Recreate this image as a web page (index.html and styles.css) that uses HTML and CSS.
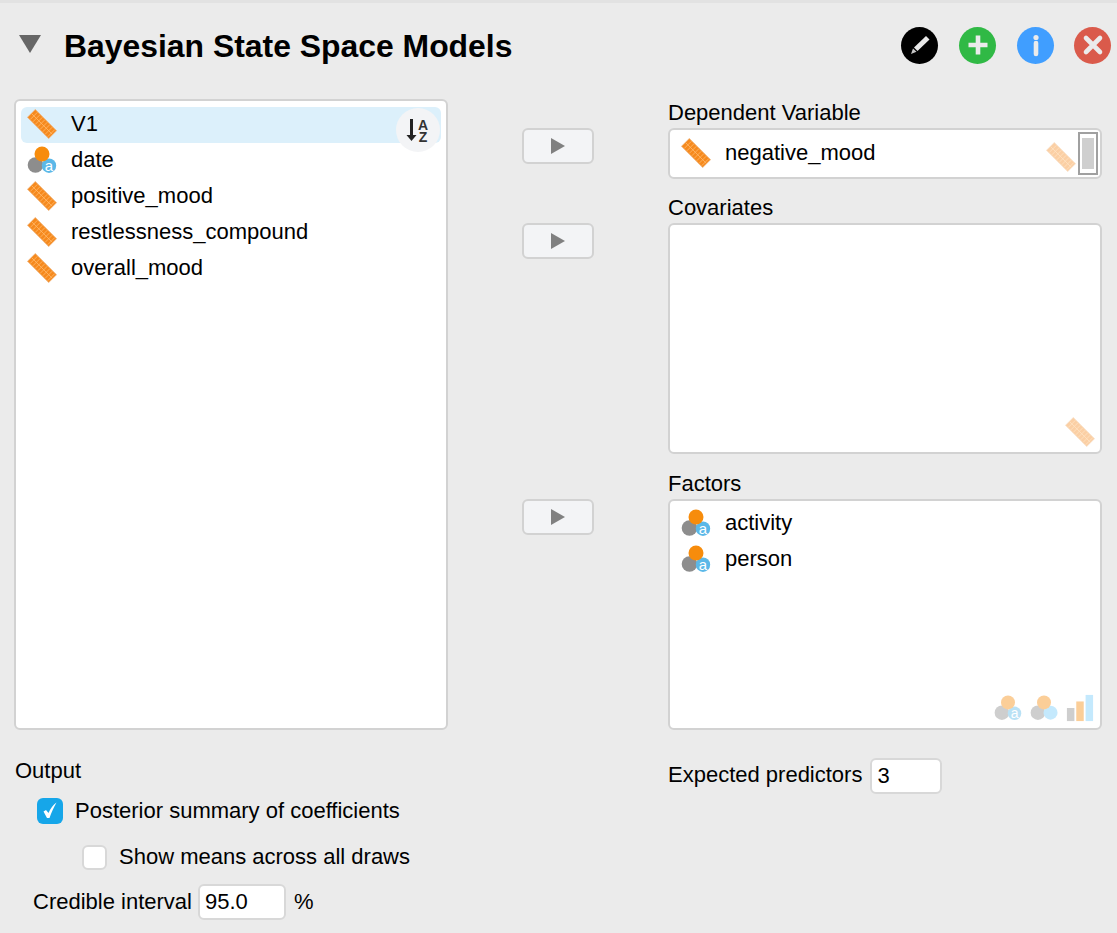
FILE: index.html
```html
<!DOCTYPE html>
<html>
<head>
    <title>Bayesian State Space Models</title>
    <link rel="stylesheet" href="styles.css">
</head>
<body>
    <svg class="defs" width="0" height="0">
        <symbol id="ruler" viewBox="0 0 30 30">
            <g transform="rotate(45 15 15)">
                <rect x="0" y="9.500" width="30" height="11" fill="#f68a1e" stroke="#eeb27a" stroke-width="0.8"/>
                <path d="M3.500 10v10M7 10v10M10.500 10v10M14 10v10M17.500 10v10M21 10v10M24.500 10v10M28 10v10M0 15h30" stroke="#ffb768" stroke-width="0.8" fill="none"/>
            </g>
        </symbol>
        <symbol id="nominal-base" viewBox="0 0 30 30">
            <circle cx="8.500" cy="20" r="7.800" fill="#8d8d8d"/>
            <circle cx="22" cy="20.700" r="7.200" fill="#5bb8e8"/>
            <circle cx="15" cy="9" r="7.500" fill="#f78c0c"/>
        </symbol>
        <symbol id="nominal" viewBox="0 0 30 30">
            <circle cx="8.500" cy="20" r="7.800" fill="#8d8d8d"/>
            <circle cx="22" cy="20" r="7.500" fill="#74cdfb"/>
            <circle cx="15" cy="9" r="7.500" fill="#f78c0c"/>
        </symbol>
        <symbol id="ordinal" viewBox="0 0 30 30">
            <rect x="1" y="15" width="8" height="14" fill="#8d8d8d"/>
            <rect x="11" y="8" width="8" height="21" fill="#f78c0c"/>
            <path d="M21 1h8v28h-8z" fill="#74cdfb"/>
        </symbol>
    </svg>

    <header class="title-bar">
        <span class="collapse-arrow"></span>
        <h1 class="title">Bayesian State Space Models</h1>
        <div class="actions">
            <span class="action action-edit">
                <svg viewBox="0 0 36 36" width="36" height="36"><path d="M24 9l3.500 3.500L15.500 24l-3.500-3.500z" fill="#e8e8e8"/><path d="M11 21.500l3.500 3.300L9 27z" fill="#c8c8c8"/></svg>
            </span>
            <span class="action action-add">
                <svg viewBox="0 0 36 36" width="36" height="36"><path d="M18 8.500v19M8.500 18h19" stroke="#ebebeb" stroke-width="4.600" fill="none"/></svg>
            </span>
            <span class="action action-info">
                <svg viewBox="0 0 36 36" width="36" height="36"><circle cx="18" cy="10.500" r="2.600" fill="#ebebeb"/><path d="M18 16v11" stroke="#ebebeb" stroke-width="4.600" stroke-linecap="round" fill="none"/></svg>
            </span>
            <span class="action action-close">
                <svg viewBox="0 0 36 36" width="36" height="36"><path d="M11 11l14 14M25 11L11 25" stroke="#ebebeb" stroke-width="4.600" stroke-linecap="round" fill="none"/></svg>
            </span>
        </div>
    </header>

    <main class="assign-grid">
        <div class="box source-list">
            <div class="var-row selected"><svg class="var-icon"><use href="#ruler"/></svg><span class="var-name">V1</span></div>
            <div class="var-row"><svg class="var-icon"><use href="#nominal-base"/><text x="22" y="25.500" class="icon-a">a</text></svg><span class="var-name">date</span></div>
            <div class="var-row"><svg class="var-icon"><use href="#ruler"/></svg><span class="var-name">positive_mood</span></div>
            <div class="var-row"><svg class="var-icon"><use href="#ruler"/></svg><span class="var-name">restlessness_compound</span></div>
            <div class="var-row"><svg class="var-icon"><use href="#ruler"/></svg><span class="var-name">overall_mood</span></div>
            <div class="sort-button">
                <svg viewBox="0 0 44 44" width="44" height="44">
                    <path d="M15.500 11v19" stroke="#222" stroke-width="3" fill="none"/>
                    <path d="M10.500 27h10l-5 6z" fill="#222"/>
                </svg>
                <span class="sort-letters">A<br>Z</span>
            </div>
        </div>

        <div class="arrow-cell"><button class="arrow-button"><span class="arrow-tri"></span></button></div>
        <div class="field">
            <div class="field-label">Dependent Variable</div>
            <div class="box box-dependent">
                <div class="var-row"><svg class="var-icon"><use href="#ruler"/></svg><span class="var-name">negative_mood</span></div>
                <svg class="hint-icon hint-dependent"><use href="#ruler"/></svg>
                <div class="focus-mark"><span></span></div>
            </div>
        </div>

        <div class="arrow-cell"><button class="arrow-button"><span class="arrow-tri"></span></button></div>
        <div class="field">
            <div class="field-label">Covariates</div>
            <div class="box box-large">
                <svg class="hint-icon hint-covariates"><use href="#ruler"/></svg>
            </div>
        </div>

        <div class="arrow-cell"><button class="arrow-button"><span class="arrow-tri"></span></button></div>
        <div class="field">
            <div class="field-label">Factors</div>
            <div class="box box-large">
                <div class="var-row"><svg class="var-icon"><use href="#nominal-base"/><text x="22" y="25.500" class="icon-a">a</text></svg><span class="var-name">activity</span></div>
                <div class="var-row"><svg class="var-icon"><use href="#nominal-base"/><text x="22" y="25.500" class="icon-a">a</text></svg><span class="var-name">person</span></div>
                <div class="hint-group">
                    <svg class="hint-small" viewBox="0 0 30 30"><use href="#nominal-base" width="30" height="30"/><text x="22" y="25.500" class="icon-a">a</text></svg>
                    <svg class="hint-small" viewBox="0 0 30 30"><use href="#nominal" width="30" height="30"/></svg>
                    <svg class="hint-small" viewBox="0 0 30 30"><use href="#ordinal" width="30" height="30"/></svg>
                </div>
            </div>
        </div>
    </main>

    <section class="options">
        <div class="options-left">
            <div class="group-label">Output</div>
            <label class="check-row check-main">
                <span class="check checked">
                    <svg viewBox="0 0 26 26" width="26" height="26"><path d="M6.500 13.500l2.500-1.500 2.500 3C13.500 10.500 16 7 19.500 4.500 17 9 14.500 14 12.500 20h-2.500z" fill="#fff"/></svg>
                </span>
                Posterior summary of coefficients
            </label>
            <label class="check-row check-sub">
                <span class="check"></span>
                Show means across all draws
            </label>
            <div class="input-row input-interval">
                Credible interval
                <input class="num-input input-wide" type="text" value="95.0">
                <span class="unit">%</span>
            </div>
        </div>
        <div class="options-right">
            <div class="input-row">
                Expected predictors
                <input class="num-input input-predictors" type="text" value="3">
            </div>
        </div>
    </section>
</body>
</html>
```

FILE: styles.css
```css
/* page */
body {
    margin: 0;
    height: 933px;
    overflow: hidden;
    background: #ebebeb;
    color: #000;
    font-family: "Liberation Sans", Arial, sans-serif;
    font-size: 22px;
    box-sizing: border-box;
    border-top: 3px solid #e2e2e2;
}

.defs {
    position: absolute;
}

.icon-a {
    font-family: "Liberation Sans", Arial, sans-serif;
    font-size: 15px;
    fill: #fff;
    text-anchor: middle;
}

/* title */
.title-bar {
    display: flex;
    align-items: center;
    height: 86px;
    padding: 0 6px 0 19px;
}

.collapse-arrow {
    width: 0;
    height: 0;
    margin-bottom: 4px;
    border-left: 11.500px solid transparent;
    border-right: 11.500px solid transparent;
    border-top: 18px solid #666;
}

.title {
    margin: 0 0 0 23px;
    font-size: 31.900px;
    font-weight: bold;
    flex: 1;
}

.actions {
    display: flex;
    gap: 21px;
    margin-bottom: 2px;
}

.action {
    display: block;
    width: 37px;
    height: 37px;
    border-radius: 50%;
}

.action svg {
    display: block;
    margin: 0.5px;
}

.action-edit { background: #000; }
.action-add { background: #30b945; }
.action-info { background: #409eff; }
.action-close { background: #da5a4b; margin-left: -1px; }

/* variable lists */
.assign-grid {
    display: grid;
    grid-template-columns: 434px 220px 434px;
    grid-template-rows: 80px 260px 260px;
    gap: 15px 0;
    margin: 10px 0 0 14px;
}

.box {
    position: relative;
    box-sizing: border-box;
    background: #fff;
    border: 2px solid #d2d2d2;
    border-radius: 6px;
}

.source-list {
    grid-column: 1;
    grid-row: 1 / 4;
    height: 631px;
    padding: 6px 5px;
}

.var-row {
    display: flex;
    align-items: center;
    height: 36px;
    padding-left: 6px;
    border-radius: 6px;
}

.var-row.selected {
    background: #dcf0fb;
}

.var-icon {
    width: 30px;
    height: 30px;
    margin: -2px 14px 0 0;
    flex: none;
}

.var-name {
    margin-top: -3px;
}

.sort-button {
    position: absolute;
    top: 7px;
    right: 6px;
    width: 44px;
    height: 44px;
    border-radius: 50%;
    background: #f3f4f6;
}

.sort-button svg {
    display: block;
}

.sort-letters {
    position: absolute;
    top: 11px;
    left: 22px;
    font-size: 14px;
    font-weight: bold;
    line-height: 12px;
    color: #333;
    text-align: center;
}

/* assign buttons */
.arrow-cell {
    padding: 29px 0 0 74px;
}

.arrow-cell:nth-of-type(2) { grid-column: 2; grid-row: 1; }
.arrow-cell:nth-of-type(4) { grid-column: 2; grid-row: 2; }
.arrow-cell:nth-of-type(6) { grid-column: 2; grid-row: 3; margin-top: 1px; }

.arrow-button {
    display: flex;
    align-items: center;
    justify-content: center;
    width: 72px;
    height: 36px;
    padding: 0;
    background: #f3f4f6;
    border: 2px solid #d2d2d2;
    border-radius: 6px;
}

.arrow-tri {
    width: 0;
    height: 0;
    border-top: 8.500px solid transparent;
    border-bottom: 8.500px solid transparent;
    border-left: 14px solid #808080;
}

/* assigned fields */
.field {
    grid-column: 3;
}

.field:nth-of-type(7) {
    margin-top: 1px;
}

.field-label {
    height: 29px;
    line-height: 27px;
}

.box-dependent {
    height: 51px;
    padding: 6px 0 0 5px;
}

.box-large {
    height: 231px;
    padding: 5px 0 0 5px;
}

.hint-icon {
    position: absolute;
    width: 30px;
    height: 30px;
    opacity: 0.4;
}

.hint-dependent {
    right: 24px;
    bottom: 5px;
}

.hint-covariates {
    right: 5px;
    bottom: 5px;
}

.focus-mark {
    position: absolute;
    top: 2px;
    right: 2px;
    box-sizing: border-box;
    width: 20px;
    height: 43px;
    padding: 4px 2px;
    border: 2px solid #a0a0a0;
    background: #fff;
}

.focus-mark span {
    display: block;
    height: 100%;
    background: #cfcfcf;
}

.hint-group {
    position: absolute;
    right: 6px;
    bottom: 6px;
    display: flex;
    gap: 8px;
    opacity: 0.42;
}

.hint-small {
    width: 28px;
    height: 28px;
}

/* options below */
.options {
    display: grid;
    grid-template-columns: 654px 434px;
    margin: 25px 0 0 14px;
}

.group-label {
    margin-left: 1px;
    line-height: 34px;
}

.check-row {
    display: flex;
    align-items: center;
}

.check {
    box-sizing: border-box;
    flex: none;
    display: block;
    width: 26px;
    height: 26px;
    border: 2px solid #d8d8d8;
    border-radius: 6px;
    background: #fff;
}

.check.checked {
    border: 0;
    background: #16a6e9;
}

.check.checked svg {
    display: block;
}

.check-main {
    margin: 10px 0 0 23px;
    gap: 12px;
}

.check-sub {
    margin: 20px 0 0 68px;
    gap: 12px;
}

.check-sub .check {
    width: 25px;
    height: 25px;
}

.input-row {
    display: flex;
    align-items: center;
}

.options-right .input-row {
    margin-top: 2px;
}

.input-interval {
    margin: 14px 0 0 19px;
}

.num-input {
    box-sizing: border-box;
    width: 72px;
    height: 36px;
    margin-left: 7px;
    padding: 0 0 0 5px;
    font: inherit;
    color: #000;
    background: #fff;
    border: 2px solid #d8d8d8;
    border-radius: 6px;
}

.input-predictors {
    margin-top: 2px;
    margin-left: 8px;
}

.input-wide {
    width: 88px;
    margin-left: 6px;
}

.unit {
    margin-left: 8px;
}
```
